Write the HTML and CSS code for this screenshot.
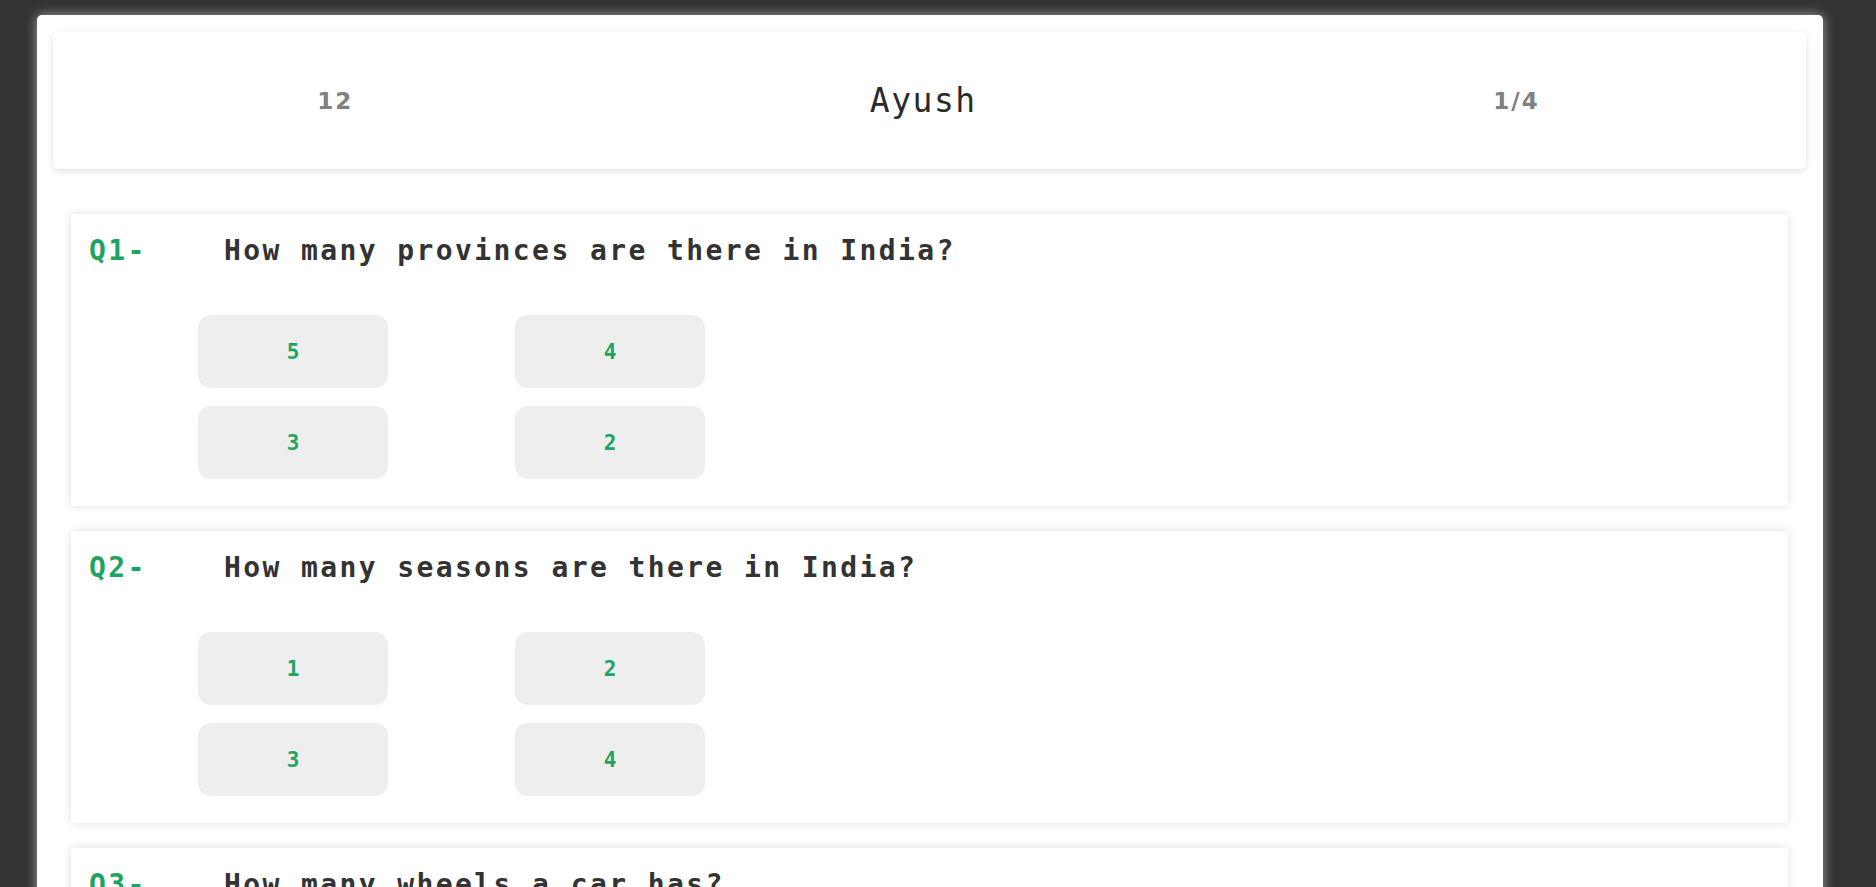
FILE: index.html
```html
<!DOCTYPE html>
<html lang="en">
<head>
<meta charset="utf-8">
<title>Quiz</title>
<link rel="stylesheet" href="styles.css">
</head>
<body>
<div class="container">
  <header class="topbar">
    <span class="stat">12</span>
    <span class="name">Ayush</span>
    <span class="stat">1/4</span>
  </header>
  <main class="questions">
    <section class="card">
      <div class="q-row"><span class="q-num">Q1-</span><span class="q-text">How many provinces are there in India?</span></div>
      <div class="options">
        <button class="opt">5</button>
        <button class="opt">4</button>
        <button class="opt">3</button>
        <button class="opt">2</button>
      </div>
    </section>
    <section class="card">
      <div class="q-row"><span class="q-num">Q2-</span><span class="q-text">How many seasons are there in India?</span></div>
      <div class="options">
        <button class="opt">1</button>
        <button class="opt">2</button>
        <button class="opt">3</button>
        <button class="opt">4</button>
      </div>
    </section>
    <section class="card">
      <div class="q-row"><span class="q-num">Q3-</span><span class="q-text">How many wheels a car has?</span></div>
      <div class="options">
        <button class="opt">2</button>
        <button class="opt">3</button>
        <button class="opt">4</button>
        <button class="opt">5</button>
      </div>
    </section>
  </main>
</div>
</body>
</html>
```

FILE: styles.css
```css
html, body {
  margin: 0;
  padding: 0;
}
body {
  background: #333333;
  font-family: "DejaVu Sans Mono", monospace;
  color: #333333;
}
.container {
  width: 1786px;
  margin: 15px 0 0 37px;
  background: #ffffff;
  border-radius: 5px 5px 0 0;
  box-shadow: 0 0 12px rgba(255, 255, 255, 0.55);
  padding: 17px 17px 0 16px;
  box-sizing: border-box;
}
.topbar {
  height: 137px;
  padding: 0 8px 0 6px;
  display: flex;
  justify-content: space-around;
  align-items: center;
  background: #ffffff;
  border-radius: 5px;
  box-shadow: 0 2px 7px rgba(0, 0, 0, 0.13);
}
.stat {
  font-family: "DejaVu Sans", sans-serif;
  font-weight: bold;
  font-size: 23px;
  letter-spacing: 2px;
  color: #808080;
}
.name {
  font-family: "DejaVu Sans Mono", monospace;
  font-size: 33px;
  letter-spacing: 1.5px;
  color: #2a2a2a;
}
.questions {
  margin-top: 45px;
  padding: 0 18px 40px;
  display: flex;
  flex-direction: column;
  gap: 25px;
}
.card {
  height: 292px;
  box-sizing: border-box;
  padding: 21px 18px 0;
  background: #ffffff;
  box-shadow: 0 0 9px rgba(0, 0, 0, 0.13);
}
.q-row {
  display: flex;
  height: 32px;
  line-height: 32px;
  font-size: 28px;
  font-weight: bold;
  letter-spacing: 2.4px;
}
.q-num {
  width: 135px;
  flex: none;
  color: #1da462;
}
.q-text {
  color: #333333;
}
.options {
  margin: 48px 0 0 109px;
  display: grid;
  grid-template-columns: 190px 190px;
  column-gap: 127px;
  row-gap: 18px;
}
.opt {
  height: 73px;
  border: none;
  border-radius: 13px;
  background: #eeeeee;
  color: #1da462;
  font-family: "DejaVu Sans Mono", monospace;
  font-weight: bold;
  font-size: 21px;
  padding: 0;
}
```
